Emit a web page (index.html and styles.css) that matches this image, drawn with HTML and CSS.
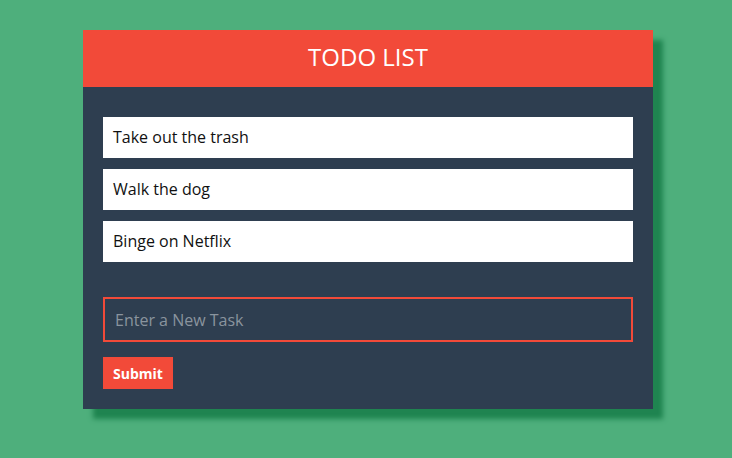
FILE: index.html
```html
<!DOCTYPE html>
<html>
<head>
<meta charset="utf-8">
<link rel="stylesheet" href="styles.css">
</head>
<body>
<div class="card">
  <div class="header">TODO LIST</div>
  <div class="content">
    <ul class="list">
      <li class="item">Take out the trash</li>
      <li class="item">Walk the dog</li>
      <li class="item">Binge on Netflix</li>
    </ul>
    <form class="form">
      <input class="task-input" type="text" placeholder="Enter a New Task">
      <button class="submit" type="button">Submit</button>
    </form>
  </div>
</div>
</body>
</html>
```
FILE: styles.css
```css
html, body {
  margin: 0;
  padding: 0;
}
body {
  background: #4eaf7c;
  font-family: "Open Sans", sans-serif;
  width: 732px;
  height: 458px;
  overflow: hidden;
}
.card {
  width: 570px;
  margin: 30px 0 0 83px;
  background: #2e3e50;
  box-shadow: 10px 10px 5px #1f8450;
}
.header {
  height: 57px;
  background: #f24a39;
  color: #fff;
  font-size: 24px;
  line-height: 54px;
  text-align: center;
}
.content {
  padding: 30px 20px 20px;
}
.list {
  list-style: none;
  margin: 0;
  padding: 0;
}
.item {
  background: #fff;
  color: #111;
  height: 41px;
  line-height: 41px;
  padding: 0 10px;
  font-size: 16px;
  margin-bottom: 11px;
}
.item:last-child {
  margin-bottom: 0;
}
.form {
  margin-top: 35px;
  display: flex;
  flex-direction: column;
  align-items: flex-start;
}
.task-input {
  box-sizing: border-box;
  width: 530px;
  height: 45px;
  border: 2px solid #f24a39;
  background: #2e3e50;
  padding: 0 10px;
  font-family: "Open Sans", sans-serif;
  font-size: 16px;
  color: #fff;
  outline: none;
}
.task-input::placeholder {
  color: #8a949e;
}
.submit {
  margin-top: 15px;
  width: 70px;
  height: 32px;
  border: none;
  background: #f24a39;
  color: #fff;
  font-family: "Open Sans", sans-serif;
  font-weight: 700;
  font-size: 14px;
  padding: 0;
}
```
